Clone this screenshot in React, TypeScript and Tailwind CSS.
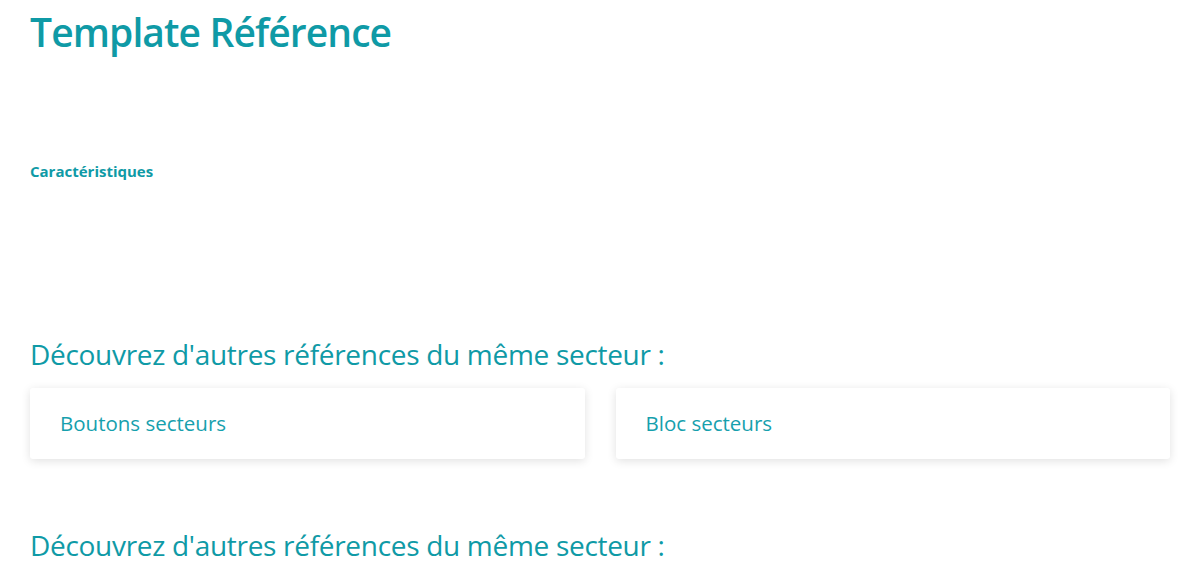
const sectors = ['Boutons secteurs', 'Bloc secteurs']

export default function App() {
  return (
    <div className="min-h-[580px] bg-white px-[30px] font-['Open_Sans',sans-serif] text-[#0f9aa6]">
      <h1 className="pt-[5px] text-[39px] font-semibold leading-[54px] tracking-[-0.9px]">Template Référence</h1>

      <h3 className="mt-[101px] text-[15px] font-bold leading-[22px]">Caractéristiques</h3>

      <section className="mt-[153px]">
        <h2 className="text-[28px] font-normal leading-[38px] tracking-[-0.3px]">Découvrez d'autres références du même secteur :</h2>
        <div className="mt-[15px] grid grid-cols-2 gap-[31px]">
          {sectors.map((name) => (
            <a
              key={name}
              className="flex h-[71px] items-center rounded-[3px] bg-white px-[30px] text-[20.5px] font-medium text-[#16a0ad] shadow-[0_2px_10px_rgba(0,0,0,0.12)]"
            >
              {name}
            </a>
          ))}
        </div>
      </section>

      <h2 className="mt-[67px] text-[28px] font-normal leading-[38px] tracking-[-0.3px]">Découvrez d'autres références du même secteur :</h2>
    </div>
  )
}
